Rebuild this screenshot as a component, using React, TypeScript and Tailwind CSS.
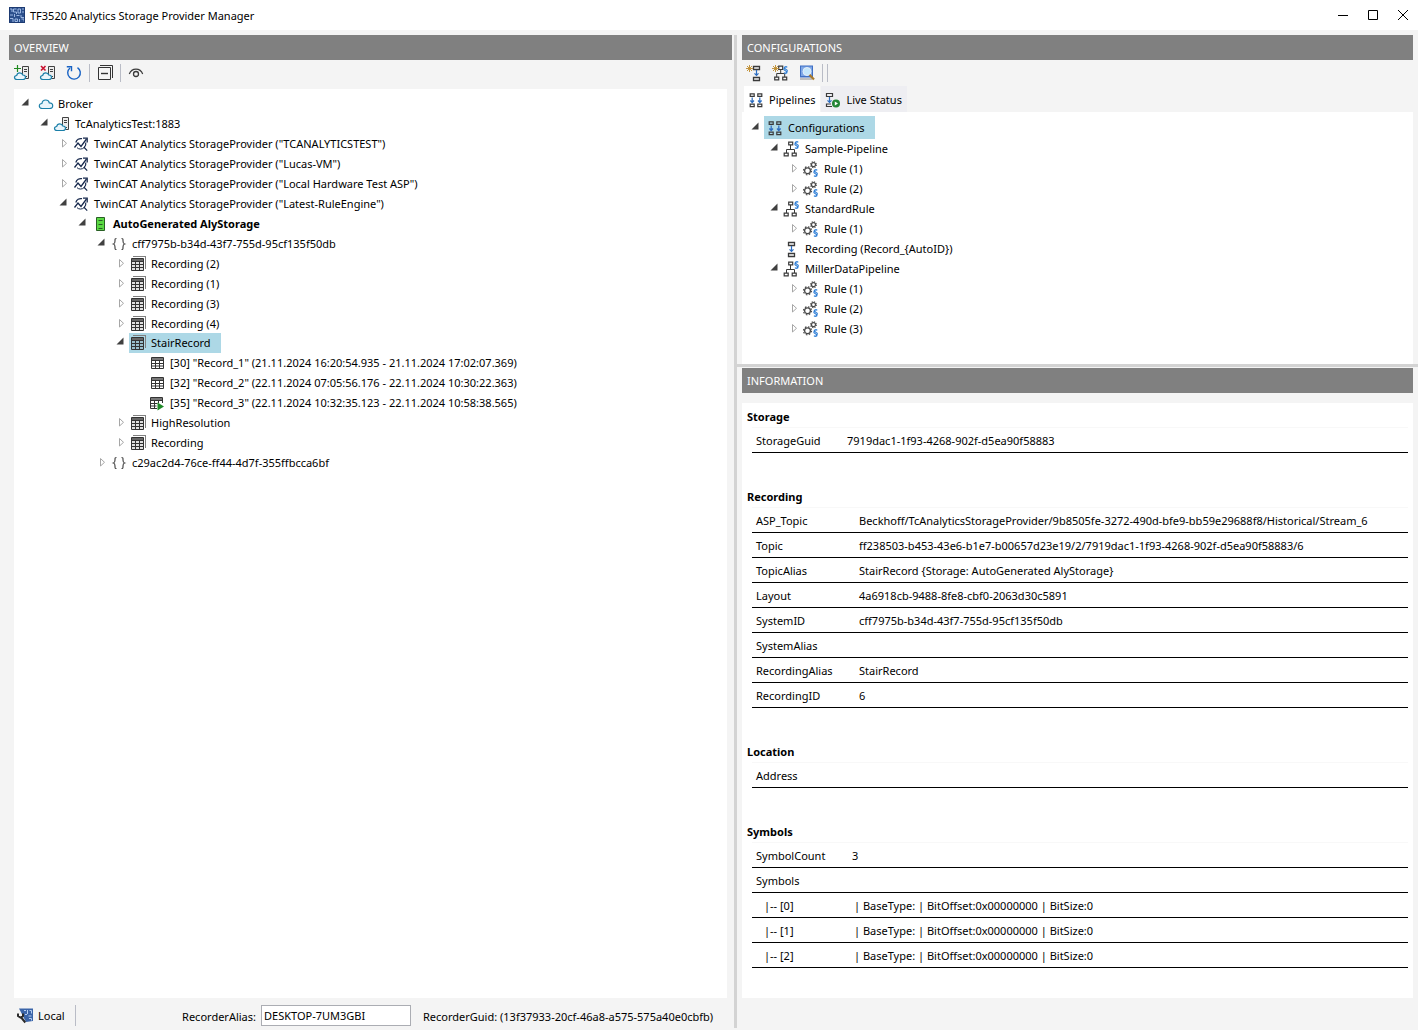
import { useState, type ReactNode } from "react";

type TreeNode = {
  label: string;
  icon: ReactNode;
  open?: boolean;
  bold?: boolean;
  children?: TreeNode[];
};

type InfoRow = { name: string; value?: string; nested?: boolean };

/* ---------- icons ---------- */

function Icon({ children, shift = 0 }: { children: ReactNode; shift?: number }) {
  return (
    <svg width="16" height="16" viewBox={`${shift} 0 16 16`} fill="none" className="shrink-0 overflow-visible" aria-hidden="true">
      {children}
    </svg>
  );
}

function CloudIcon() {
  return (
    <Icon>
      <path
        d="M4.300 12.500C2.500 12.500 1.300 11.500 1.300 9.900c0-1.500 1.100-2.400 2.600-2.400C4.200 5.400 5.700 4 7.700 4c1.800 0 3.200 1.100 3.600 2.800 2 0 3.400 1.200 3.400 2.900s-1.400 2.800-3.300 2.800z"
        fill="#eaf5fb"
        stroke="#1b7fa8"
        strokeWidth="1.200"
      />
    </Icon>
  );
}

function ServerShape() {
  return (
    <>
      <path d="M8.500 1.500h6v12h-6z" fill="#ececec" stroke="#424242" />
      <path d="M10 4.500h3M10 6.500h3" stroke="#424242" />
      <path d="M12 11h1v1h-1z" fill="#424242" />
    </>
  );
}

function CloudShape() {
  return (
    <path
      d="M3 14.500C1.400 14.500.5 13.700.5 12.500s.9-1.900 2.200-2c.3-1.700 1.500-2.700 3.100-2.700 1.500 0 2.600.8 3 2.200 1.600 0 2.700.9 2.700 2.300s-1.100 2.200-2.600 2.200z"
      fill="#eaf5fb"
      stroke="#1b7fa8"
      strokeWidth="1.200"
    />
  );
}

function CloudServerIcon() {
  return (
    <Icon shift={1}>
      <ServerShape />
      <CloudShape />
    </Icon>
  );
}

function AddServerIcon() {
  return (
    <Icon>
      <ServerShape />
      <CloudShape />
      <path d="M0 3.500h7M3.500 0v7" stroke="#218a21" strokeWidth="1.200" />
    </Icon>
  );
}

function RemoveServerIcon() {
  return (
    <Icon>
      <ServerShape />
      <CloudShape />
      <path d="M1 1l4.500 4.500M5.500 1L1 5.500" stroke="#c8102e" strokeWidth="1.600" />
    </Icon>
  );
}

function RefreshIcon() {
  return (
    <Icon>
      <path d="M11.500 2.600A6.300 6.300 0 1 1 4 3" stroke="#1762c4" strokeWidth="1.400" />
      <path d="M.8 1.700h4.700v4.600" stroke="#1762c4" strokeWidth="1.400" />
    </Icon>
  );
}

function CollapseIcon() {
  return (
    <Icon>
      <path d="M3 .5h12.500V13" stroke="#333" />
      <path d="M1.500 2.500h12v12h-12z" fill="#f4f4f4" stroke="#333" />
      <path d="M4 8.500h7" stroke="#333" strokeWidth="1.400" />
    </Icon>
  );
}

function EyeIcon() {
  return (
    <Icon>
      <path d="M1.300 9C2.500 5.800 5 4.100 8 4.100s5.500 1.700 6.700 4.900" stroke="#3a3a3a" strokeWidth="1.200" />
      <circle cx="8" cy="9" r="2.500" stroke="#3a3a3a" strokeWidth="1.300" />
    </Icon>
  );
}

function ProviderIcon() {
  return (
    <Icon shift={1}>
      <path d="M1.500 11.500l3.500-4.500 3 3.500L13.500 3" stroke="#17294d" strokeWidth="1.300" />
      <path d="M10 2.200h4.200v4.200" stroke="#17294d" strokeWidth="1.300" />
      <path d="M2.800 6.500A5.200 5.200 0 0 1 9 2.700M12.700 6.500a5.200 5.200 0 0 1-1.500 5l3 3.200" stroke="#17294d" strokeWidth="1.200" />
      <path d="M4 11.700a5.200 5.200 0 0 0 7.200-.2" stroke="#17294d" />
    </Icon>
  );
}

function StorageIcon() {
  return (
    <Icon shift={1}>
      <path d="M4.500 1.500h8v13h-8z" fill="#5ad943" stroke="#285f24" />
      <path d="M6.500 4.500h4M6.500 8.500h4M6.500 12.500h4" stroke="#285f24" />
    </Icon>
  );
}

function BracesIcon() {
  return (
    <Icon shift={1}>
      <path
        d="M5.500 2.500C3.800 2.500 4 3.500 4 5s0 2.500-1.500 3C4 8.500 4 9.500 4 11s-.2 2.500 1.500 2.500M10.500 2.500c1.700 0 1.500 1 1.500 2.500s0 2.500 1.500 3c-1.500.5-1.500 1.500-1.500 3s.2 2.500-1.500 2.500"
        stroke="#4a4a4a"
        strokeWidth="1.200"
      />
    </Icon>
  );
}

function TablesIcon() {
  return (
    <Icon>
      <path d="M2 .5h13M14.500 0v13" stroke="#808080" />
      <path d="M.5 2.500h12v12H.5z" fill="currentColor" fillOpacity=".12" stroke="#333" />
      <path d="M1 3h11v2H1z" fill="#666" />
      <path d="M1 5.500h11M1 8.500h11M1 11.500h11M4.500 5v9.500M8.500 5v9.500" stroke="#333" />
    </Icon>
  );
}

function TableIcon() {
  return (
    <Icon shift={1}>
      <path d="M2.500 2.500h12v11h-12z" stroke="#333" />
      <path d="M3 3h11v2H3z" fill="#777" />
      <path d="M2.500 5.500h12M2.500 8.500h12M2.500 11h12M6.500 5v8.500M10.500 5v8.500" stroke="#333" />
    </Icon>
  );
}

function TablePlayIcon() {
  return (
    <Icon shift={1}>
      <path d="M8 13.500H1.500v-11h12V8" stroke="#333" />
      <path d="M2 3h11v2H2z" fill="#777" />
      <path d="M1.500 5.500h12M1.500 8.500h7M1.500 11h6M5.500 5v8.500M9.500 5v3" stroke="#333" />
      <path d="M8.500 7.500l6.500 4-6.500 4z" fill="#1f8a28" />
    </Icon>
  );
}

function FlowIcon() {
  return (
    <Icon shift={2}>
      <path d="M5.500 1.500h6v3h-6zM5.500 12.500h6v3h-6z" stroke="#3a3a3a" strokeWidth="1.300" />
      <path d="M8.500 5v5.300M6.500 8.300l2 2 2-2" stroke="#2b6cc0" strokeWidth="1.200" />
    </Icon>
  );
}

function PipelinesIcon() {
  return (
    <Icon shift={1}>
      <path d="M2.200 1.800h4v2.500h-4zM9.800 1.800h4v2.500h-4zM2.200 12.200h4v2.500h-4zM9.800 12.200h4v2.500h-4z" stroke="#3a3a3a" strokeWidth="1.200" />
      <path d="M4.200 5.500v5M2.400 8.500l1.800 2 1.800-2M11.800 5.500v5M10 8.500l1.800 2 1.800-2" stroke="#2b6cc0" strokeWidth="1.200" />
    </Icon>
  );
}

function LiveIcon() {
  return (
    <Icon shift={1}>
      <path d="M1.500 1.500h6v3h-6zM7 14.500H1.500V12H6" stroke="#3a3a3a" strokeWidth="1.200" />
      <path d="M4.500 5v5M2.500 8.300l2 2 2-2" stroke="#2b6cc0" strokeWidth="1.200" />
      <circle cx="11" cy="11.500" r="4" fill="#238636" />
      <path d="M9.800 9.500l3.200 2-3.200 2z" fill="#fff" />
    </Icon>
  );
}

function StarShape() {
  return <path d="M3.500 0v7M0 3.500h7M1 1l5 5M6 1L1 6" stroke="#bd8b2c" strokeWidth=".9" />;
}

function SectionShape({ x, y }: { x: number; y: number }) {
  return (
    <path
      d="M4.200 1.300C3.500.4 1.200.4 1.200 1.800c0 1.500 3.200 1.500 3.200 3 0 .9-.8 1.300-1.700 1.300M1 6.700c.7.900 3 .9 3-.5 0-1.500-3.200-1.500-3.200-3 0-.9.800-1.300 1.700-1.300"
      transform={`translate(${x} ${y})`}
      stroke="#2f7fd6"
      strokeWidth="1.100"
    />
  );
}

function RulePipelineIcon() {
  return (
    <Icon shift={2}>
      <path d="M5.700 1.200h4v2.600h-4zM1.200 12.200h4v2.700h-4zM9.200 12.200h4v2.700h-4z" stroke="#3a3a3a" strokeWidth="1.200" />
      <path d="M7.500 4v4.500M3.500 12V8.500h8V12" stroke="#3a3a3a" />
      <SectionShape x={11} y={0} />
    </Icon>
  );
}

function NewRecordingIcon() {
  return (
    <Icon shift={1}>
      <path d="M7.500 1.500h6v3h-6zM7.500 12.500h6v3h-6z" stroke="#3a3a3a" strokeWidth="1.300" />
      <path d="M10.500 5v5.300M8.500 8.300l2 2 2-2" stroke="#2b6cc0" strokeWidth="1.200" />
      <StarShape />
    </Icon>
  );
}

function NewPipelineIcon() {
  return (
    <Icon shift={1}>
      <path d="M6.700 1.200h4v3.300h-4zM2.700 12.200h4v2.700h-4zM10.700 12.200h4v2.700h-4z" stroke="#3a3a3a" strokeWidth="1.200" />
      <path d="M8.700 5v3.500M4.700 12V8.500h8V12" stroke="#3a3a3a" />
      <StarShape />
      <SectionShape x={11} y={1} />
    </Icon>
  );
}

function SearchIcon() {
  return (
    <Icon>
      <path d="M1 .5h13v12H1z" fill="#3f6fc4" />
      <path d="M2 1.500h11v9.500H2z" fill="#7da6e6" />
      <path d="M1 14h12" stroke="#a8a8a8" strokeWidth="1.400" />
      <circle cx="8" cy="6.500" r="4" fill="#c4e6fb" stroke="#e4eef8" />
      <path d="M10.500 9.800l4.500 4.700" stroke="#a8792b" strokeWidth="2.200" />
    </Icon>
  );
}

function RuleIcon() {
  return (
    <Icon shift={2}>
      <circle cx="5.500" cy="9.800" r="4" stroke="#4a4a4a" strokeWidth="1.200" strokeDasharray="1.600 1.542" />
      <circle cx="5.500" cy="9.800" r="2.900" stroke="#4a4a4a" strokeWidth="1.300" />
      <circle cx="11.500" cy="3.700" r="2.900" stroke="#4a4a4a" strokeWidth="1.100" strokeDasharray="1.200 1.078" />
      <circle cx="11.500" cy="3.700" r="2" stroke="#4a4a4a" strokeWidth="1.200" />
      <SectionShape x={11} y={8} />
    </Icon>
  );
}

function AppIcon() {
  return (
    <Icon>
      <path d="M0 0h16v16H0z" fill="#2b4f8c" />
      <path
        d="M1 2h2v3M4.500 2h3M4.500 2v3h3v2M9 2h2.500v4H9zM13 2h2M13 5h2M1 8h3M5.500 7v3M7.500 8.500h3M12 8v2.500h3M1 11.500h3V15M6 12h2.500v2.500H6zM10.500 12v3M12.500 12h2.500v2.500"
        stroke="#a9c3ec"
        strokeWidth=".9"
      />
      <path d="M.5.5h15v15H.5z" stroke="#1d3a72" />
    </Icon>
  );
}

function LocalIcon() {
  return (
    <Icon>
      <path d="M2 .5h14V13l-7 1z" fill="#3a64a8" />
      <path d="M7 2.500h2M10.500 2v4M12.500 2.500h2v3M8 6.500h2M11.500 8h3M12 10.500h2.500v2" stroke="#b5cdf0" />
      <path d="M1 5.500v2.500l2.500 1.500L6 8V5.500M3.800 9l4.500 5.500" stroke="#2b2b2b" strokeWidth="2" />
    </Icon>
  );
}

/* ---------- data ---------- */

const recording = (label: string): TreeNode => ({ label, icon: <TablesIcon />, children: [] });
const provider = (name: string, children: TreeNode[] = []): TreeNode => ({
  label: `TwinCAT Analytics StorageProvider ("${name}")`,
  icon: <ProviderIcon />,
  open: children.length > 0,
  children,
});
const rule = (n: number): TreeNode => ({ label: `Rule (${n})`, icon: <RuleIcon />, children: [] });

const overview: TreeNode = {
  label: "Broker",
  icon: <CloudIcon />,
  open: true,
  children: [
    {
      label: "TcAnalyticsTest:1883",
      icon: <CloudServerIcon />,
      open: true,
      children: [
        provider("TCANALYTICSTEST"),
        provider("Lucas-VM"),
        provider("Local Hardware Test ASP"),
        provider("Latest-RuleEngine", [
          {
            label: "AutoGenerated AlyStorage",
            icon: <StorageIcon />,
            open: true,
            bold: true,
            children: [
              {
                label: "cff7975b-b34d-43f7-755d-95cf135f50db",
                icon: <BracesIcon />,
                open: true,
                children: [
                  recording("Recording (2)"),
                  recording("Recording (1)"),
                  recording("Recording (3)"),
                  recording("Recording (4)"),
                  {
                    label: "StairRecord",
                    icon: <TablesIcon />,
                    open: true,
                    children: [
                      { label: '[30] "Record_1" (21.11.2024 16:20:54.935 - 21.11.2024 17:02:07.369)', icon: <TableIcon /> },
                      { label: '[32] "Record_2" (22.11.2024 07:05:56.176 - 22.11.2024 10:30:22.363)', icon: <TableIcon /> },
                      { label: '[35] "Record_3" (22.11.2024 10:32:35.123 - 22.11.2024 10:58:38.565)', icon: <TablePlayIcon /> },
                    ],
                  },
                  recording("HighResolution"),
                  recording("Recording"),
                ],
              },
              { label: "c29ac2d4-76ce-ff44-4d7f-355ffbcca6bf", icon: <BracesIcon />, children: [] },
            ],
          },
        ]),
      ],
    },
  ],
};

const configurations: TreeNode = {
  label: "Configurations",
  icon: <PipelinesIcon />,
  open: true,
  children: [
    { label: "Sample-Pipeline", icon: <RulePipelineIcon />, open: true, children: [rule(1), rule(2)] },
    { label: "StandardRule", icon: <RulePipelineIcon />, open: true, children: [rule(1)] },
    { label: "Recording (Record_{AutoID})", icon: <FlowIcon /> },
    { label: "MillerDataPipeline", icon: <RulePipelineIcon />, open: true, children: [rule(1), rule(2), rule(3)] },
  ],
};

const recordingRows: InfoRow[] = [
  { name: "ASP_Topic", value: "Beckhoff/TcAnalyticsStorageProvider/9b8505fe-3272-490d-bfe9-bb59e29688f8/Historical/Stream_6" },
  { name: "Topic", value: "ff238503-b453-43e6-b1e7-b00657d23e19/2/7919dac1-1f93-4268-902f-d5ea90f58883/6" },
  { name: "TopicAlias", value: "StairRecord {Storage: AutoGenerated AlyStorage}" },
  { name: "Layout", value: "4a6918cb-9488-8fe8-cbf0-2063d30c5891" },
  { name: "SystemID", value: "cff7975b-b34d-43f7-755d-95cf135f50db" },
  { name: "SystemAlias" },
  { name: "RecordingAlias", value: "StairRecord" },
  { name: "RecordingID", value: "6" },
];

const symbolRows: InfoRow[] = [
  { name: "SymbolCount", value: "3" },
  { name: "Symbols" },
  { name: "|-- [0]", value: "| BaseType: | BitOffset:0x00000000 | BitSize:0", nested: true },
  { name: "|-- [1]", value: "| BaseType: | BitOffset:0x00000000 | BitSize:0", nested: true },
  { name: "|-- [2]", value: "| BaseType: | BitOffset:0x00000000 | BitSize:0", nested: true },
];

/* ---------- tree ---------- */

function Toggle({ open, onClick }: { open: boolean; onClick: () => void }) {
  return (
    <button type="button" aria-label={open ? "Collapse" : "Expand"} onClick={onClick} className="flex h-4 w-4 shrink-0 items-center justify-center">
      {open ? (
        <svg width="8" height="8" viewBox="0 0 8 8" className="mr-0.5 mb-1">
          <path d="M7.500.500v7h-7z" fill="#404040" />
        </svg>
      ) : (
        <svg width="8" height="10" viewBox="0 0 8 10">
          <path d="M2.500 .500v7.500L6.500 4.300z" fill="#fff" stroke="#a6a6a6" />
        </svg>
      )}
    </button>
  );
}

function Node({
  node,
  root = false,
  selected,
  selectedClass,
  onSelect,
}: {
  node: TreeNode;
  root?: boolean;
  selected: string;
  selectedClass: string;
  onSelect: (label: string) => void;
}) {
  const [open, setOpen] = useState(!!node.open);
  const isSelected = node.label === selected;

  return (
    <li role="treeitem" aria-selected={isSelected} aria-expanded={node.children ? open : undefined}>
      <div className={`flex items-center ${isSelected ? selectedClass : "h-5"}`}>
        {node.children ? <Toggle open={open} onClick={() => setOpen(!open)} /> : <span className="w-4 shrink-0" />}
        <button
          type="button"
          onClick={() => onSelect(node.label)}
          className={`flex h-full items-center gap-1 pr-[10px] whitespace-nowrap ${root ? "pl-1" : "pl-0.5"} ${isSelected ? "bg-[#add8e6]" : ""} ${node.bold ? "font-bold" : ""}`}
        >
          {node.icon}
          {node.label}
        </button>
      </div>
      {open && node.children && node.children.length > 0 && (
        <ul role="group" className="pl-[19px]">
          {node.children.map((child) => (
            <Node key={child.label} node={child} selected={selected} selectedClass={selectedClass} onSelect={onSelect} />
          ))}
        </ul>
      )}
    </li>
  );
}

function Tree({ root, initial, selectedClass, label }: { root: TreeNode; initial: string; selectedClass: string; label: string }) {
  const [selected, setSelected] = useState(initial);
  return (
    <ul role="tree" aria-label={label}>
      <Node root node={root} selected={selected} selectedClass={selectedClass} onSelect={setSelected} />
    </ul>
  );
}

/* ---------- panels ---------- */

function PanelHeader({ children }: { children: ReactNode }) {
  return <h2 className="flex h-[25px] shrink-0 items-center bg-[#808080] px-[5px] text-white">{children}</h2>;
}

function ToolButton({ label, children }: { label: string; children: ReactNode }) {
  return (
    <button type="button" title={label} aria-label={label} className="flex h-[26px] w-[26px] items-center justify-center hover:bg-[#dcebf5]">
      {children}
    </button>
  );
}

function Separator() {
  return <span className="mx-0.5 h-[18px] w-px bg-[#b9bcc6]" />;
}

function InfoSection({ title, rows, nameWidth }: { title: string; rows: InfoRow[]; nameWidth: string }) {
  return (
    <section className="mb-[31px] last:mb-0">
      <h3 className="flex h-[23px] items-center pt-0.5 pl-[5px] font-bold">{title}</h3>
      <div className="pr-[5px] pl-[10px]">
        <table className="w-full border-t border-[#f8f8f8] text-left">
          <tbody>
            {rows.map((row) => (
              <tr key={row.name} className="h-[25px] border-b border-black">
                <th scope="row" className={`${nameWidth} pt-0.5 font-normal ${row.nested ? "pl-3" : "pl-1"}`}>
                  {row.name}
                </th>
                <td className={`pt-0.5 ${row.nested ? "pl-0.5" : ""}`}>{row.value}</td>
              </tr>
            ))}
          </tbody>
        </table>
      </div>
    </section>
  );
}

function TitleBar() {
  return (
    <header className="flex h-[30px] shrink-0 items-center bg-white pl-[9px]">
      <AppIcon />
      <h1 className="pt-0.5 pl-[5px]">TF3520 Analytics Storage Provider Manager</h1>
      <div className="ml-auto flex h-full">
        <button type="button" aria-label="Minimize" className="flex w-[30px] items-center justify-center">
          <svg width="10" height="10" viewBox="0 0 10 10"><path d="M0 5.500h10" stroke="#000" /></svg>
        </button>
        <button type="button" aria-label="Maximize" className="flex w-[30px] items-center justify-center">
          <svg width="10" height="10" viewBox="0 0 10 10"><path d="M.5.5h9v9h-9z" fill="none" stroke="#000" /></svg>
        </button>
        <button type="button" aria-label="Close" className="flex w-[30px] items-center justify-center">
          <svg width="10" height="10" viewBox="0 0 10 10"><path d="M0 0l10 10M10 0L0 10" stroke="#000" /></svg>
        </button>
      </div>
    </header>
  );
}

function OverviewPanel() {
  return (
    <section className="flex min-w-0 flex-col pr-0.5 pl-[9px]">
      <PanelHeader>OVERVIEW</PanelHeader>
      <div className="flex h-[29px] shrink-0 items-start">
        <ToolButton label="Add broker"><AddServerIcon /></ToolButton>
        <ToolButton label="Remove broker"><RemoveServerIcon /></ToolButton>
        <ToolButton label="Refresh"><RefreshIcon /></ToolButton>
        <span className="flex h-[26px] items-center">
          <Separator />
          <ToolButton label="Collapse all"><CollapseIcon /></ToolButton>
          <Separator />
          <ToolButton label="Show hidden"><EyeIcon /></ToolButton>
        </span>
      </div>
      <div className="mx-[5px] flex-1 overflow-x-auto bg-white pt-[5px] pl-1">
        <Tree root={overview} initial="StairRecord" selectedClass="-mt-px h-5" label="Overview" />
      </div>
      <footer className="flex h-8 shrink-0 items-center pr-[7px] pb-0.5 pl-2 whitespace-nowrap">
        <button type="button" className="flex items-center gap-[5px] pt-1.5">
          <LocalIcon />
          Local
        </button>
        <span className="mt-1 ml-[10px] h-[21px] w-px bg-[#b9bcc6]" />
        <label htmlFor="recorder-alias" className="mr-[5px] ml-auto pt-2">RecorderAlias:</label>
        <input
          id="recorder-alias"
          defaultValue="DESKTOP-7UM3GBI"
          className="mt-1 h-[21px] w-[150px] border border-[#abadb3] bg-white px-0.5 outline-none"
        />
        <span className="min-w-[314px] pt-2 pl-3">RecorderGuid: (13f37933-20cf-46a8-a575-575a40e0cbfb)</span>
      </footer>
    </section>
  );
}

function ConfigurationsPanel() {
  const [tab, setTab] = useState("pipelines");
  const tabClass = (id: string) => (tab === id ? "bg-white" : "bg-[#eeeef2]");
  return (
    <section className="flex h-[329px] shrink-0 flex-col px-[5px]">
      <PanelHeader>CONFIGURATIONS</PanelHeader>
      <div className="flex h-[26px] items-center">
        <ToolButton label="New recording"><NewRecordingIcon /></ToolButton>
        <ToolButton label="New pipeline"><NewPipelineIcon /></ToolButton>
        <ToolButton label="Search"><SearchIcon /></ToolButton>
        <Separator />
        <Separator />
      </div>
      <div role="tablist" className="flex h-[26px] gap-px pl-0.5">
        <button role="tab" type="button" aria-selected={tab === "pipelines"} onClick={() => setTab("pipelines")} className={`flex items-center gap-1 px-[5px] pt-0.5 ${tabClass("pipelines")}`}>
          <PipelinesIcon />
          Pipelines
        </button>
        <button role="tab" type="button" aria-selected={tab === "live"} onClick={() => setTab("live")} className={`flex items-center gap-1 px-[5px] pt-0.5 ${tabClass("live")}`}>
          <LiveIcon />
          Live Status
        </button>
      </div>
      <div className="flex-1 overflow-auto bg-white pt-1 pl-1.5">
        <Tree root={configurations} initial="Configurations" selectedClass="h-[23px]" label="Configurations" />
      </div>
    </section>
  );
}

function InformationPanel() {
  return (
    <section className="flex flex-1 flex-col px-[5px] pb-8">
      <PanelHeader>INFORMATION</PanelHeader>
      <div className="mt-[10px] flex-1 bg-white pt-px">
        <InfoSection title="Storage" rows={[{ name: "StorageGuid", value: "7919dac1-1f93-4268-902f-d5ea90f58883" }]} nameWidth="w-[95px]" />
        <InfoSection title="Recording" rows={recordingRows} nameWidth="w-[107px]" />
        <InfoSection title="Location" rows={[{ name: "Address" }]} nameWidth="w-[107px]" />
        <InfoSection title="Symbols" rows={symbolRows} nameWidth="w-[100px]" />
      </div>
    </section>
  );
}

export default function App() {
  return (
    <div className="flex min-h-screen flex-col bg-[#f4f4f4] font-['Noto_Sans','Open_Sans',sans-serif] text-[11px] leading-4 text-black">
      <TitleBar />
      <main className="grid flex-1 grid-cols-[734fr_3px_681fr] pt-[5px]">
        <OverviewPanel />
        <div className="mb-0.5 bg-[#d3d3d3]" />
        <div className="flex min-w-0 flex-col">
          <ConfigurationsPanel />
          <div className="mb-px h-[3px] shrink-0 bg-[#d3d3d3]" />
          <InformationPanel />
        </div>
      </main>
    </div>
  );
}
